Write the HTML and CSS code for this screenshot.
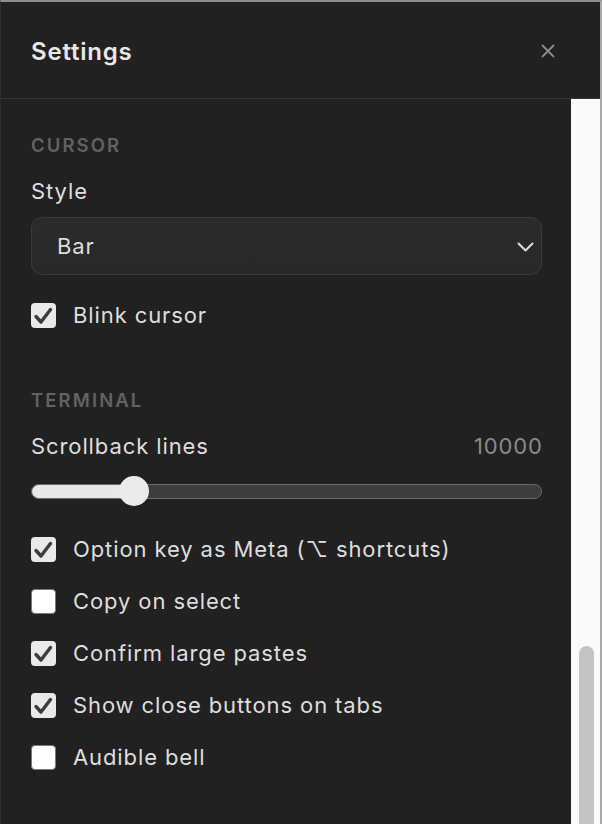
FILE: index.html
```html
<!DOCTYPE html>
<html>
<head>
<meta charset="utf-8">
<link rel="stylesheet" href="styles.css">
</head>
<body>
<div class="window">
  <header class="header">
    <h1 class="title">Settings</h1>
    <button class="close" aria-label="Close">
      <svg width="14" height="14" viewBox="0 0 14 14"><path d="M1.5 1.5 L12.5 12.5 M12.5 1.5 L1.5 12.5" stroke="#8c8c8c" stroke-width="1.8" stroke-linecap="round" fill="none"/></svg>
    </button>
  </header>
  <div class="body">
    <div class="content">
      <div class="section-label">CURSOR</div>
      <div class="field-label">Style</div>
      <div class="select">
        <span class="select-value">Bar</span>
        <svg class="chevron" width="17" height="10" viewBox="0 0 17 10"><path d="M1.5 1.5 L8.5 8.5 L15.5 1.5" stroke="#dcdcdc" stroke-width="2" fill="none" stroke-linecap="round" stroke-linejoin="round"/></svg>
      </div>
      <div class="check-row first">
        <span class="box checked"><svg width="25" height="25" viewBox="0 0 25 25"><path d="M5 13.5 L10 19 L19.5 6.5" stroke="#3b3b3b" stroke-width="3.4" fill="none" stroke-linecap="round" stroke-linejoin="round"/></svg></span>
        <span class="check-label">Blink cursor</span>
      </div>

      <div class="section-label terminal">TERMINAL</div>
      <div class="field-row">
        <span class="field-label">Scrollback lines</span>
        <span class="value">10000</span>
      </div>
      <div class="slider">
        <div class="track"><div class="fill" style="width:103px"></div></div>
        <div class="thumb" style="left:88px"></div>
      </div>
      <div class="checks">
        <div class="check-row">
          <span class="box checked"><svg width="25" height="25" viewBox="0 0 25 25"><path d="M5 13.5 L10 19 L19.5 6.5" stroke="#3b3b3b" stroke-width="3.4" fill="none" stroke-linecap="round" stroke-linejoin="round"/></svg></span>
          <span class="check-label">Option key as Meta (⌥ shortcuts)</span>
        </div>
        <div class="check-row">
          <span class="box"></span>
          <span class="check-label">Copy on select</span>
        </div>
        <div class="check-row">
          <span class="box checked"><svg width="25" height="25" viewBox="0 0 25 25"><path d="M5 13.5 L10 19 L19.5 6.5" stroke="#3b3b3b" stroke-width="3.4" fill="none" stroke-linecap="round" stroke-linejoin="round"/></svg></span>
          <span class="check-label">Confirm large pastes</span>
        </div>
        <div class="check-row">
          <span class="box checked"><svg width="25" height="25" viewBox="0 0 25 25"><path d="M5 13.5 L10 19 L19.5 6.5" stroke="#3b3b3b" stroke-width="3.4" fill="none" stroke-linecap="round" stroke-linejoin="round"/></svg></span>
          <span class="check-label">Show close buttons on tabs</span>
        </div>
        <div class="check-row">
          <span class="box"></span>
          <span class="check-label">Audible bell</span>
        </div>
      </div>
    </div>
    <div class="scrollbar">
      <div class="thumb-bar"></div>
    </div>
  </div>
</div>
</body>
</html>
```

FILE: styles.css
```css
* { box-sizing: border-box; }
html, body { margin: 0; padding: 0; }
body {
  width: 602px;
  height: 824px;
  overflow: hidden;
  background: #212121;
  font-family: Inter, "Noto Sans", "Liberation Sans", sans-serif;
}
.window {
  width: 602px;
  height: 824px;
  display: flex;
  flex-direction: column;
  background: #212121;
  border-top: 2px solid #8e8e8e;
  border-right: 2px solid #a9a9a9;
  border-left: 1px solid #2d2d2d;
}
.header {
  height: 97px;
  flex: none;
  display: flex;
  align-items: center;
  justify-content: space-between;
  padding: 0 45px 0 30px;
  border-bottom: 1px solid #363636;
}
.title {
  margin: 0;
  font-size: 24px;
  font-weight: 600;
  color: #e8e8e8;
  letter-spacing: 0.8px;
  margin-top: 2px;
}
.close {
  width: 14px;
  height: 14px;
  padding: 0;
  border: 0;
  background: none;
  display: flex;
  margin-top: 2px;
}
.body {
  flex: 1;
  display: flex;
  min-height: 0;
}
.content {
  flex: 1;
  padding: 36px 29px 0 30px;
  display: flex;
  flex-direction: column;
}
.section-label {
  font-size: 18.5px;
  line-height: 20px;
  font-weight: 600;
  letter-spacing: 2.1px;
  color: #626262;
}
.section-label.terminal { margin-top: 62px; }
.field-label {
  font-size: 22px;
  line-height: 24px;
  letter-spacing: 0.9px;
  color: #dedede;
  margin-top: 24px;
}
.field-row {
  display: flex;
  justify-content: space-between;
  align-items: center;
  margin-top: 24px;
}
.field-row .field-label { margin-top: 0; }
.value {
  font-size: 22px;
  line-height: 24px;
  letter-spacing: 0.9px;
  margin-right: -0.9px;
  color: #8a8a8a;
}
.select {
  margin-top: 14px;
  height: 58px;
  border: 1.5px solid #3b3b3b;
  border-radius: 11px;
  background: linear-gradient(#2b2b2b, #282828);
  display: flex;
  align-items: center;
  justify-content: space-between;
  padding: 0 7px 0 25px;
}
.select-value {
  font-size: 22px;
  letter-spacing: 0.9px;
  color: #dedede;
}
.chevron { margin-top: 1px; }
.check-row {
  display: flex;
  align-items: center;
  height: 26px;
  gap: 17px;
}
.check-row.first { margin-top: 27px; }
.checks {
  margin-top: 30px;
  display: flex;
  flex-direction: column;
  gap: 26px;
}
.box {
  width: 25px;
  height: 25px;
  flex: none;
  border-radius: 4px;
  background: #ffffff;
  border: 1.5px solid #7a7a7a;
  display: flex;
  align-items: center;
  justify-content: center;
}
.box.checked {
  background: #e9e9e9;
  border: none;
}
.check-label {
  font-size: 22px;
  letter-spacing: 0.9px;
  color: #dedede;
  white-space: nowrap;
}
.slider {
  position: relative;
  height: 30px;
  margin-top: 18px;
  display: flex;
  align-items: center;
}
.track {
  flex: 1;
  height: 15px;
  border: 1.5px solid #6b6b6b;
  border-radius: 8px;
  background: #3d3d3d;
  overflow: hidden;
}
.fill {
  height: 100%;
  background: #e8e8e8;
}
.thumb {
  position: absolute;
  top: 0;
  width: 30px;
  height: 30px;
  border-radius: 50%;
  background: #ebebeb;
}
.scrollbar {
  width: 29px;
  flex: none;
  background: #fafafa;
  padding: 547px 6px 0 8px;
}
.thumb-bar {
  height: 200px;
  border-radius: 8px;
  background: #c3c3c3;
}
```
